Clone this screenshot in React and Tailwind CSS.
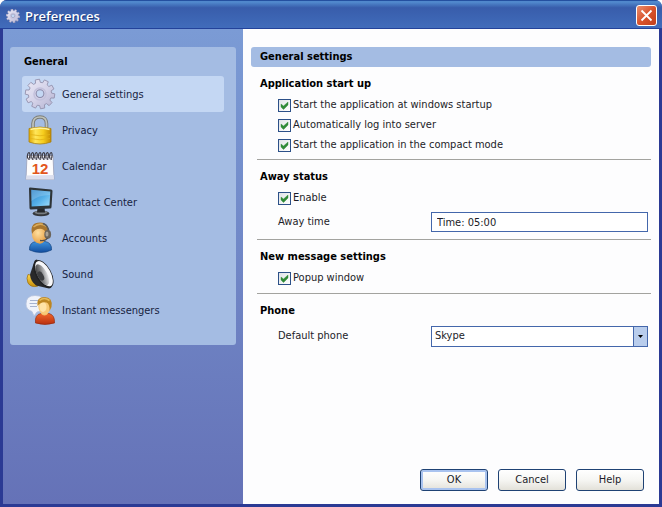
import React, { useState } from 'react';

const TEETH = 10;

// Outline of the cog: four corners per tooth, on a 30x30 canvas
const gearPoints = Array.from({ length: TEETH }, (_, i) => {
    const step = (Math.PI * 2) / TEETH;
    const corners = [[-0.34, 11.6], [-0.23, 14.8], [0.23, 14.8], [0.34, 11.6]];
    return corners.map(([offset, r]) => {
        const a = (i + offset) * step - 1.75;
        return `${(15 + r * Math.cos(a)).toFixed(2)},${(15 + r * Math.sin(a)).toFixed(2)}`;
    }).join(' ');
}).join(' ');

function GearIcon({ className }) {
    return (
        <svg viewBox="0 0 30 30" className={className} aria-hidden="true">
            <defs>
                <linearGradient id="gear" x1="0" y1="0" x2="1" y2="1">
                    <stop offset="0" stopColor="#eceaf6" />
                    <stop offset="0.5" stopColor="#d5d3e9" />
                    <stop offset="1" stopColor="#b3b1d0" />
                </linearGradient>
            </defs>
            <polygon points={gearPoints} fill="url(#gear)" stroke="#9391ad" strokeWidth="0.9" strokeLinejoin="round" />
            <circle cx="15" cy="15" r="6" fill="none" stroke="#c3c1dc" strokeWidth="1.5" />
            <circle cx="15" cy="14.6" r="3.9" fill="#c4d7f3" stroke="#8b8aa9" strokeWidth="1.1" />
        </svg>
    );
}

function LockIcon({ className }) {
    return (
        <svg viewBox="0 0 30 30" className={className} aria-hidden="true">
            <defs>
                <linearGradient id="lock" x1="0" y1="0" x2="1" y2="0">
                    <stop offset="0" stopColor="#e0a800" />
                    <stop offset="0.3" stopColor="#ffe65a" />
                    <stop offset="0.65" stopColor="#f6cd1c" />
                    <stop offset="1" stopColor="#c48a00" />
                </linearGradient>
            </defs>
            <path d="M8 15V8.5C8 4.5 11 2 15 2s6.5 2.5 6.5 6.5V15" fill="none" stroke="#7b7d78" strokeWidth="3.6" />
            <path d="M8 15V8.5C8 4.5 11 2 15 2s6.5 2.5 6.5 6.5V15" fill="none" stroke="#bfc2ba" strokeWidth="1.7" />
            <path d="M4 13.5Q15 10.5 26 13.5V27Q15 31 4 27Z" fill="url(#lock)" stroke="#a98010" strokeWidth="0.8" />
            <path d="M5.5 14.5Q15 12 24.5 14.5" fill="none" stroke="#fff29a" strokeWidth="1.3" />
            <path d="M5 19.5Q15 22 25 19.5M5 23.5Q15 26 25 23.5" fill="none" stroke="#e2b214" strokeWidth="0.8" />
        </svg>
    );
}

function CalendarIcon({ className }) {
    return (
        <svg viewBox="0 0 30 30" className={className} aria-hidden="true">
            <path d="M2 4.5H28L29 28.5H1Z" fill="#fdfcfd" stroke="#9a9fb8" strokeWidth="0.8" />
            <path d="M1.5 24.5L28.7 24L29 28.5H1Z" fill="#dcdfee" />
            <path d="M2.5 6H27.5V8.5H2.5Z" fill="#d5d7e2" />
            {[4, 7.7, 11.4, 15.1, 18.8, 22.5, 26.2].map((x) => (
                <g key={x}>
                    <path d={`M${x - 1.5} 7.5Q${x - 2} 2 ${x} 1.5Q${x + 1.5} 2 ${x + 0.5} 7`} fill="none" stroke="#3d3b43" strokeWidth="1.2" />
                    <circle cx={x} cy="8" r="0.9" fill="#4b4953" />
                </g>
            ))}
            <text x="15" y="22.5" textAnchor="middle" fontFamily="Liberation Sans, sans-serif" fontWeight="700" fontSize="15" fill="#e2551c">12</text>
        </svg>
    );
}

function MonitorIcon({ className }) {
    return (
        <svg viewBox="0 0 30 30" className={className} aria-hidden="true">
            <defs>
                <linearGradient id="screen" x1="0" y1="0" x2="1" y2="1">
                    <stop offset="0" stopColor="#2f83c8" />
                    <stop offset="0.55" stopColor="#55b0e8" />
                    <stop offset="1" stopColor="#9edcfb" />
                </linearGradient>
            </defs>
            <ellipse cx="16" cy="26.5" rx="8.5" ry="2.8" fill="#34373b" />
            <ellipse cx="16" cy="25.5" rx="6.5" ry="1.7" fill="#777c80" />
            <path d="M12.5 20H19.5L20 25.5H12Z" fill="#25282b" />
            <path d="M4 1.5Q4 0.5 5 0.5L26 2.500Q27.500 2.700 27.500 4L26.500 20Q26.500 21.500 25 21.500L6 22.500Q4.500 22.500 4.500 21Z" fill="#2e3438" />
            <path d="M6.200 2.800L25.300 4.500L24.500 18.500L6.600 19.500Z" fill="url(#screen)" />
            <path d="M6.200 2.800L25.300 4.500L25.100 8Q13 8 6.400 14Z" fill="#fff" opacity="0.18" />
        </svg>
    );
}

function AccountIcon({ className }) {
    return (
        <svg viewBox="0 0 30 30" className={className} aria-hidden="true">
            <defs>
                <radialGradient id="face" cx="0.4" cy="0.4" r="0.7">
                    <stop offset="0" stopColor="#ffe0a0" />
                    <stop offset="1" stopColor="#e59a3c" />
                </radialGradient>
                <linearGradient id="shirtBlue" x1="0" y1="0" x2="0" y2="1">
                    <stop offset="0" stopColor="#3f93dc" />
                    <stop offset="1" stopColor="#124d9f" />
                </linearGradient>
            </defs>
            <path d="M4.5 27Q4 19.5 11 18.5H20Q27 19.5 26.5 27Q16 32 4.5 27Z" fill="url(#shirtBlue)" stroke="#164684" strokeWidth="0.7" />
            <path d="M10.5 17.5Q15 24 19.5 17.5Z" fill="#e39a42" />
            <ellipse cx="14.5" cy="11.5" rx="7.5" ry="8.8" fill="url(#face)" />
            <path d="M7 11Q4.5 -0.5 15 -0.5Q25 -0.5 23.5 12L21.5 14Q21.5 7 17 6Q10 5 7 11Z" fill="#a8752d" />
            <path d="M8.5 4Q15 -1.5 21.5 3.500" fill="none" stroke="#d9aa58" strokeWidth="1.5" />
            <path d="M18 0.5Q24 3 23.5 9" fill="none" stroke="#5a5b5c" strokeWidth="1.6" />
            <ellipse cx="22.7" cy="11.5" rx="3.4" ry="4.4" fill="#6b645b" />
            <ellipse cx="22" cy="11" rx="1.5" ry="2.5" fill="#aaa295" />
            <path d="M22.5 15Q20.5 18.5 15 17.5" fill="none" stroke="#504d4a" strokeWidth="1.3" />
        </svg>
    );
}

function SpeakerIcon({ className }) {
    return (
        <svg viewBox="0 0 30 30" className={className} aria-hidden="true">
            <defs>
                <linearGradient id="cone" x1="0" y1="0" x2="1" y2="0.6">
                    <stop offset="0" stopColor="#2c2c2d" />
                    <stop offset="0.5" stopColor="#77787a" />
                    <stop offset="1" stopColor="#e4e4e6" />
                </linearGradient>
                <linearGradient id="magnet" x1="0" y1="0" x2="0" y2="1">
                    <stop offset="0" stopColor="#ffd84d" />
                    <stop offset="1" stopColor="#c68d0a" />
                </linearGradient>
            </defs>
            <path d="M3 15.5L10 17L13 27Q6 29 3 24Q1 19 3 15.5Z" fill="url(#magnet)" stroke="#9a6c08" strokeWidth="0.7" />
            <path d="M5 15.5L9.5 2Q10 0.5 12 0.5L26 24Q28 29 24 29.5L11 26.5Q5.5 22 5 15.5Z" fill="#29292b" />
            <ellipse cx="18.5" cy="15" rx="7.8" ry="15.3" transform="rotate(-29 18.5 15)" fill="#202123" />
            <ellipse cx="19" cy="14.7" rx="6.5" ry="14" transform="rotate(-29 19 14.7)" fill="#f7f7f9" />
            <ellipse cx="17.3" cy="15.600" rx="4.9" ry="11.500" transform="rotate(-29 17.3 15.600)" fill="url(#cone)" />
            <ellipse cx="15.8" cy="17" rx="2.7" ry="5" transform="rotate(-29 15.8 17)" fill="#3c3d40" />
        </svg>
    );
}

function MessengerIcon({ className }) {
    return (
        <svg viewBox="0 0 30 30" className={className} aria-hidden="true">
            <defs>
                <linearGradient id="shirtRed" x1="0" y1="0" x2="0" y2="1">
                    <stop offset="0" stopColor="#f0662a" />
                    <stop offset="1" stopColor="#b82f10" />
                </linearGradient>
            </defs>
            <path d="M1 9Q1 0.5 10 0.5Q20 0.5 20 9Q20 16 12 17L9 21L7 16.5Q1 14.5 1 9Z" fill="#f0f3fb" stroke="#b5c1dc" strokeWidth="0.8" />
            <path d="M5 5.5H13M4.5 8.5H12M5 11.5H12" stroke="#a7b3d0" strokeWidth="1" />
            <path d="M10.5 28Q9.5 19.5 16 18.5H24Q30 20 29.5 28Q20 31 10.5 28Z" fill="url(#shirtRed)" stroke="#97290d" strokeWidth="0.7" />
            <path d="M15.5 18Q19.5 23 23.5 18Z" fill="#f6c06c" />
            <ellipse cx="19.5" cy="11.5" rx="6.2" ry="7.8" fill="#f8ca78" />
            <ellipse cx="18" cy="12" rx="3.5" ry="5" fill="#ffe3a6" />
            <path d="M12.5 11Q11 2 19.5 2Q28 2 26.5 12L24.5 16Q25 9 21.5 7.5Q16 6 12.5 11Z" fill="#bd8622" />
            <path d="M14.5 5.5Q19 1.5 24.5 5.5" fill="none" stroke="#e5bb57" strokeWidth="1.6" />
        </svg>
    );
}

const navItems = [
    { id: 'general', icon: GearIcon, label: 'General settings' },
    { id: 'privacy', icon: LockIcon, label: 'Privacy' },
    { id: 'calendar', icon: CalendarIcon, label: 'Calendar' },
    { id: 'contacts', icon: MonitorIcon, label: 'Contact Center' },
    { id: 'accounts', icon: AccountIcon, label: 'Accounts' },
    { id: 'sound', icon: SpeakerIcon, label: 'Sound' },
    { id: 'messengers', icon: MessengerIcon, label: 'Instant messengers' }
];

function Section({ title, className = '', children }) {
    return (
        <section className={`ml-1.5 pt-[7px] ${className}`}>
            <h3 className="h-5 mb-px pl-[3px] leading-5 font-bold text-black">{title}</h3>
            {children}
        </section>
    );
}

function Check({ label, checked, onChange }) {
    return (
        <label className="flex items-center gap-[2px] h-5 pl-[21px]">
            <span className="grid size-[13px] shrink-0">
                <input type="checkbox" checked={checked} onChange={onChange} className="col-start-1 row-start-1 appearance-none size-[13px] border border-[#2c5088] bg-linear-to-br from-[#dfe3e6] to-white" />
                {checked && (
                    <svg viewBox="0 0 13 13" className="col-start-1 row-start-1 size-[13px] pointer-events-none" aria-hidden="true">
                        <path d="M3 5L5.5 7L10 3V6L5.5 10.5L3 8Z" fill="#2f8a36" stroke="#2f8a36" strokeWidth="0.4" />
                    </svg>
                )}
            </span>
            {label}
        </label>
    );
}

export default function App() {
    const [page, setPage] = useState('general');
    const [time, setTime] = useState('Time: 05:00');
    const [phone, setPhone] = useState('Skype');
    const [options, setOptions] = useState({ startup: true, login: true, compact: true, away: true, popup: true });

    const toggle = (key) => () => setOptions({ ...options, [key]: !options[key] });

    const button = 'w-[68px] h-[22px] rounded-[3px] border border-[#1f4274] bg-linear-to-b from-white via-[#f6f6f3] to-[#e3e1d9] text-center';

    return (
        <div className="min-h-screen flex flex-col bg-[#2b3a94] rounded-t-[7px] overflow-hidden font-['DejaVu_Sans_Condensed','DejaVu_Sans',sans-serif] text-[11px] text-[#1c1c28]">
            <header className="h-[29px] shrink-0 flex items-center gap-[5px] pl-1.5 pr-[5px] pt-0.5 border-t border-b border-t-[#2450a0] border-b-[#23429a] bg-linear-to-b from-[#5088cc] from-5% via-[#385dab] via-25% to-[#416cbb]">
                <GearIcon className="size-[14px]" />
                <h1 className="flex-1 text-[13px] leading-4 font-semibold text-white font-['Open_Sans',sans-serif] [text-shadow:1px_1px_0_#1c3876]">Preferences</h1>
                <button type="button" aria-label="Close" className="size-[21px] grid place-items-center rounded-[3px] border border-white bg-linear-to-br from-[#e88d6c] via-[#d9532c] to-[#c23f1c]">
                    <svg viewBox="0 0 13 13" className="size-[13px]" aria-hidden="true">
                        <path d="M1.5 1.5L11.5 11.5M11.5 1.5L1.5 11.5" stroke="#fff" strokeWidth="1.8" />
                    </svg>
                </button>
            </header>

            <div className="flex-1 flex mx-[3px] mb-[3px]">
                <aside className="w-60 shrink-0 pt-[18px] px-[7px] bg-linear-to-b from-[#7b9bd5] to-[#6572b7]">
                    <nav className="rounded-[3px] bg-[#a4bce3] pt-1.5 pb-[17px] px-3">
                        <h2 className="h-[23px] pl-0.5 leading-[18px] font-bold text-black">General</h2>
                        {navItems.map((item) => {
                            const Icon = item.icon;
                            const active = page === item.id ? 'bg-[#c4d7f3]' : '';
                            return (
                                <button key={item.id} type="button" onClick={() => setPage(item.id)} className={`w-full h-9 flex items-center gap-[7px] pl-[3px] rounded-[3px] text-left text-[#17233f] ${active}`}>
                                    <Icon className="size-[30px] shrink-0 overflow-visible" />
                                    <span className="pt-[3px]">{item.label}</span>
                                </button>
                            );
                        })}
                    </nav>
                </aside>

                <main className="flex-1 flex flex-col px-2 pt-[18px] bg-[#fdfdfe]">
                    <h2 className="h-5 rounded-[3px] bg-[#a4bce3] pl-[9px] leading-5 font-bold text-black">General settings</h2>

                    <Section title="Application start up" className="pb-1 border-b border-[#a3a39f]">
                        <Check label="Start the application at windows startup" checked={options.startup} onChange={toggle('startup')} />
                        <Check label="Automatically log into server" checked={options.login} onChange={toggle('login')} />
                        <Check label="Start the application in the compact mode" checked={options.compact} onChange={toggle('compact')} />
                    </Section>

                    <Section title="Away status" className="pb-[7px] border-b border-[#a3a39f]">
                        <Check label="Enable" checked={options.away} onChange={toggle('away')} />
                        <div className="flex items-center mt-1 pl-[21px] pr-[3px]">
                            <label htmlFor="away-time" className="w-[153px] shrink-0">Away time</label>
                            <input id="away-time" type="text" value={time} onChange={(e) => setTime(e.target.value)} className="flex-1 min-w-0 h-5 px-[5px] border border-[#4467ab] bg-white" />
                        </div>
                    </Section>

                    <Section title="New message settings" className="pb-[5px] border-b border-[#a3a39f]">
                        <Check label="Popup window" checked={options.popup} onChange={toggle('popup')} />
                    </Section>

                    <Section title="Phone">
                        <div className="flex items-center mt-[5px] pl-[21px] pr-[3px]">
                            <label htmlFor="default-phone" className="w-[153px] shrink-0">Default phone</label>
                            <div className="flex-1 grid">
                                <select id="default-phone" value={phone} onChange={(e) => setPhone(e.target.value)} className="col-start-1 row-start-1 appearance-none w-full h-[21px] px-[3px] border border-[#4467ab] bg-white">
                                    <option>Skype</option>
                                </select>
                                <span className="col-start-1 row-start-1 justify-self-end w-[15px] h-[21px] grid place-items-center border border-[#4467ab] bg-[#b9cdec] pointer-events-none">
                                    <svg viewBox="0 0 5 3" className="w-[5px] h-[3px]" aria-hidden="true">
                                        <path d="M0 0H5L2.5 3Z" fill="#000" />
                                    </svg>
                                </span>
                            </div>
                        </div>
                    </Section>

                    <footer className="mt-auto flex justify-end gap-2.5 pr-[7px] pt-4 pb-[13px]">
                        <button type="button" className={`${button} shadow-[inset_0_0_0_2px_#a9c3ef]`}>OK</button>
                        <button type="button" className={button}>Cancel</button>
                        <button type="button" className={button}>Help</button>
                    </footer>
                </main>
            </div>
        </div>
    );
}
